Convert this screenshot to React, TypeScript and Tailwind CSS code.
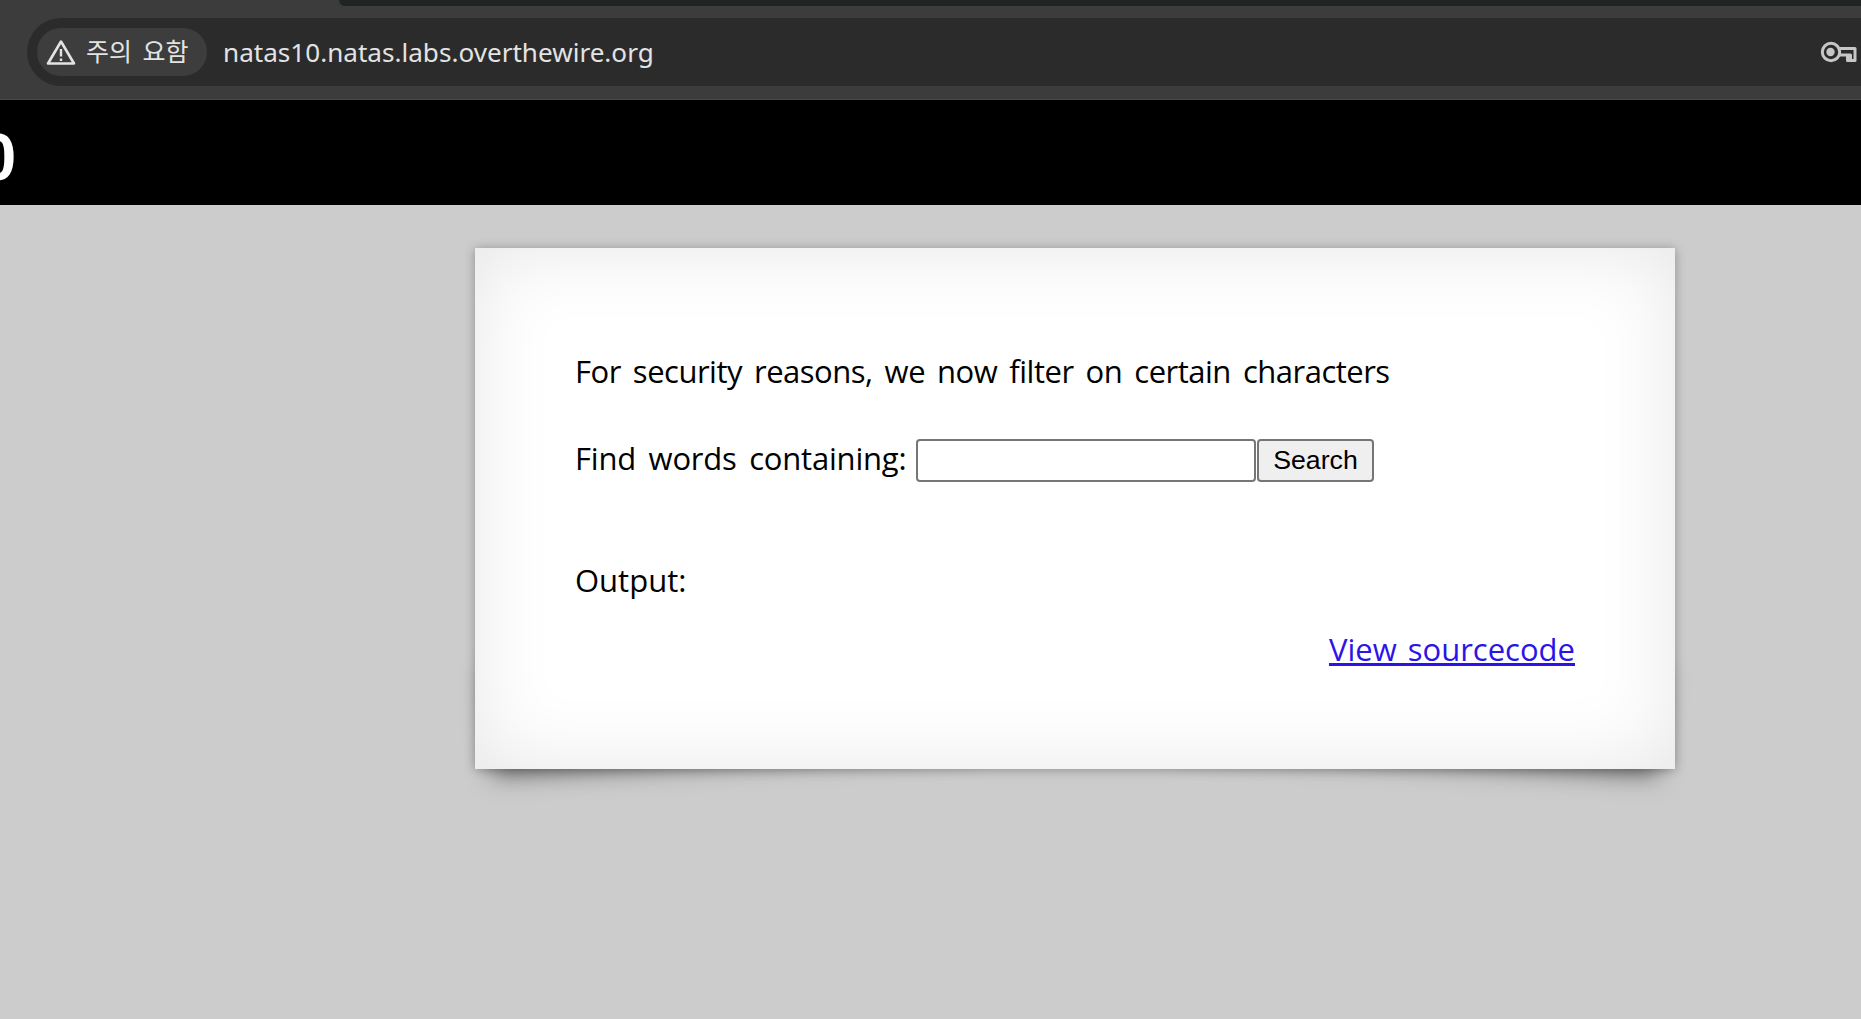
export default function App() {
  return (
    <div className="isolate h-[1019px] w-full overflow-hidden bg-[#cccccc]">
      <div className="relative h-[100px] bg-[#3c3c3c] border-b border-[#484848]">
        <div className="ml-[339px] h-[6px] rounded-bl-[10px] bg-[#202423]" />
        <div className="ml-[27px] mt-[12px] flex h-[68px] items-center rounded-l-[34px] bg-[#2b2b2b] pl-[10px]">
          <div className="flex h-[48px] w-[170px] items-center rounded-[24px] bg-[#3d3d3d] pl-[9px]">
            <svg width="30" height="26" viewBox="0 0 30 26" fill="none" className="shrink-0">
              <path d="M15 2.5 L28 24.5 L2 24.5 Z" stroke="#e3e3e3" strokeWidth="2.6" strokeLinejoin="round" />
              <path d="M15 10 V17.5" stroke="#e3e3e3" strokeWidth="2.4" />
              <path d="M15 19.5 V22" stroke="#e3e3e3" strokeWidth="2.4" />
            </svg>
            <span className="ml-[10px] mt-[-4px] whitespace-pre text-[25px] leading-[28px] text-[#e3e3e3] [word-spacing:5px] font-['Noto_Sans_CJK_KR',sans-serif]">주의 요함</span>
          </div>
          <span className="ml-[16px] text-[26.1px] leading-[34px] text-[#e3e3e3] font-['Noto_Sans',sans-serif]">natas10.natas.labs.overthewire.org</span>
          <svg width="37" height="22" viewBox="0 0 37 22" fill="none" className="ml-auto mr-[4px]">
            <circle cx="11" cy="11" r="8.7" stroke="#c7c7c7" strokeWidth="3" />
            <circle cx="10.5" cy="11" r="4.2" fill="#c7c7c7" />
            <path d="M19 7.5 H35 V19.5 H27.5 V14 M27.5 19.5 V14 M19 14 H30.5 V19" stroke="#c7c7c7" strokeWidth="3" strokeLinejoin="round" />
          </svg>
        </div>
      </div>
      <div className="h-[105px] overflow-hidden bg-black">
        <h1 className="ml-[-232px] mt-[20px] text-[66.67px] leading-[74px] font-bold text-white font-['Liberation_Sans',sans-serif]">natas10</h1>
      </div>
      <div className="relative ml-[475px] mt-[43px] h-[521px] w-[1200px] bg-white pl-[100px] pr-[100px] pt-[99px] text-black shadow-[0_1px_10px_rgba(0,0,0,0.3),inset_0_0_80px_rgba(0,0,0,0.1)] font-['Open_Sans',sans-serif] text-[31px]">
        <div aria-hidden className="absolute bottom-[26px] left-[14px] -z-10 h-[104px] w-[480px] -rotate-3 shadow-[0_20px_24px_rgba(0,0,0,0.5)]" />
        <div aria-hidden className="absolute bottom-[26px] right-[14px] -z-10 h-[104px] w-[480px] rotate-3 shadow-[0_20px_24px_rgba(0,0,0,0.5)]" />
        <p className="leading-[48px] tracking-[-0.5px] [word-spacing:4.5px]">For security reasons, we now filter on certain characters</p>
        <div className="mt-[39px] flex items-start">
          <span className="w-[341px] shrink-0 leading-[48px] tracking-[-0.2px] [word-spacing:4.7px]">Find words containing:</span>
          <input className="mt-[5px] h-[43px] w-[340px] rounded-[4px] border-2 border-[#767676] bg-white" />
          <button className="ml-[1px] mt-[5px] h-[43px] w-[117px] rounded-[4px] border-2 border-[#767676] bg-[#efefef] text-[26.67px] leading-none font-['Liberation_Sans',sans-serif]">Search</button>
        </div>
        <p className="mt-[74px] leading-[48px]">Output:</p>
        <div className="mt-[21px] text-right">
          <a href="#" className="leading-[48px] text-[#2a14e8] underline decoration-[3px] [word-spacing:3px]">View sourcecode</a>
        </div>
      </div>
    </div>
  );
}
